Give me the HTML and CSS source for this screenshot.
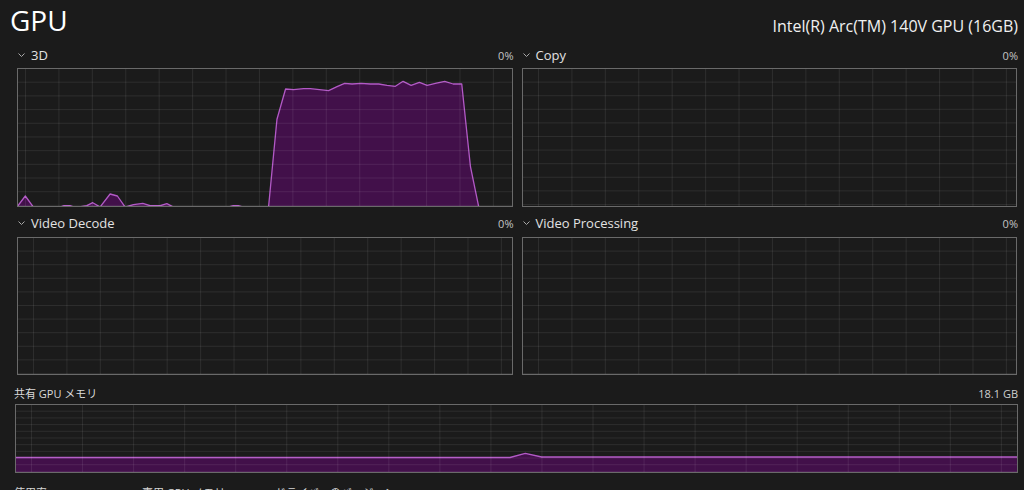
FILE: index.html
```html
<!DOCTYPE html>
<html lang="ja">
<head>
<meta charset="utf-8">
<title>GPU</title>
<link rel="stylesheet" href="styles.css">
</head>
<body>
<div class="page">
  <header class="top">
    <h1 class="title">GPU</h1>
    <div class="device">Intel(R) Arc(TM) 140V GPU (16GB)</div>
  </header>

  <div class="engines">
    <section class="engine engine-first">
      <div class="engine-head">
        <span class="engine-name"><svg class="chev" viewBox="0 0 7 4"><polyline points="0.5,0.5 3.5,3.5 6.5,0.5"/></svg>3D</span>
        <span class="pct">0%</span>
      </div>
      <div class="chart chart-tall grid-shift-a">
        <svg viewBox="0 0 493 137" preserveAspectRatio="none">
          <polygon class="area" points="-1,138 7.3,127 15.3,138 42,138 46,136.7 52,136.7 56,138 60.3,138 68.7,136.7 74.7,133.7 82,138 92,125 99.3,127 107,138 115.3,135.7 124.7,134.3 132,136.7 142,136.7 148.7,134.7 155.3,138 210,138 215,136.7 220,136.7 225,138 250.3,138 258.7,50.3 267.3,20 275.3,20.7 285.3,19.7 292,19.7 310.3,21.7 318.7,17.7 326.3,14.3 333.7,15 342.7,14.3 352,15 360.3,15 368.7,16.3 377,17.3 384.7,12.3 392.7,16.3 401,13.3 408.7,16.3 417,14.3 426.3,12.3 434.7,15 443.3,15 452,97.7 460.3,138 494,138"/>
          <polyline class="line" points="-1,138 7.3,127 15.3,138 42,138 46,136.7 52,136.7 56,138 60.3,138 68.7,136.7 74.7,133.7 82,138 92,125 99.3,127 107,138 115.3,135.7 124.7,134.3 132,136.7 142,136.7 148.7,134.7 155.3,138 210,138 215,136.7 220,136.7 225,138 250.3,138 258.7,50.3 267.3,20 275.3,20.7 285.3,19.7 292,19.7 310.3,21.7 318.7,17.7 326.3,14.3 333.7,15 342.7,14.3 352,15 360.3,15 368.7,16.3 377,17.3 384.7,12.3 392.7,16.3 401,13.3 408.7,16.3 417,14.3 426.3,12.3 434.7,15 443.3,15 452,97.7 460.3,138 494,138"/>
        </svg>
      </div>
    </section>

    <section class="engine engine-first">
      <div class="engine-head">
        <span class="engine-name"><svg class="chev" viewBox="0 0 7 4"><polyline points="0.5,0.5 3.5,3.5 6.5,0.5"/></svg>Copy</span>
        <span class="pct">0%</span>
      </div>
      <div class="chart chart-tall grid-shift-b"></div>
    </section>

    <section class="engine engine-second">
      <div class="engine-head">
        <span class="engine-name"><svg class="chev" viewBox="0 0 7 4"><polyline points="0.5,0.5 3.5,3.5 6.5,0.5"/></svg>Video Decode</span>
        <span class="pct">0%</span>
      </div>
      <div class="chart chart-mid grid-shift-b"></div>
    </section>

    <section class="engine engine-second">
      <div class="engine-head">
        <span class="engine-name"><svg class="chev" viewBox="0 0 7 4"><polyline points="0.5,0.5 3.5,3.5 6.5,0.5"/></svg>Video Processing</span>
        <span class="pct">0%</span>
      </div>
      <div class="chart chart-mid grid-shift-b"></div>
    </section>
  </div>

  <section class="memory">
    <div class="mem-head">
      <span class="mem-name">共有 GPU メモリ</span>
      <span class="mem-size">18.1 GB</span>
    </div>
    <div class="chart chart-mem">
      <svg viewBox="0 0 1001 67" preserveAspectRatio="none">
        <polygon class="area" points="-1,52.5 494,52.5 509.3,48.3 525.7,52 1002,52 1002,68 -1,68"/>
        <polyline class="line" points="-1,52.5 494,52.5 509.3,48.3 525.7,52 1002,52"/>
      </svg>
    </div>
  </section>

  <div class="stats">
    <span>使用率</span>
    <span>専用 GPU メモリ</span>
    <span>ドライバーのバージョン:</span>
  </div>
</div>
</body>
</html>
```

FILE: styles.css
```css
html, body {
  margin: 0;
  padding: 0;
  background: #1b1b1b;
  overflow: hidden;
}

body {
  width: 1024px;
  height: 490px;
  font-family: "Open Sans", "Noto Sans CJK JP", sans-serif;
  color: #e6e6e6;
}

.page {
  padding: 0 6px 0 10px;
}

.top {
  height: 44px;
  display: flex;
  justify-content: space-between;
  align-items: flex-start;
}

.title {
  margin: 0;
  font-size: 28px;
  font-weight: 400;
  line-height: 40px;
  color: #ffffff;
}

.device {
  font-size: 16px;
  line-height: 20px;
  margin-top: 16px;
  color: #f0f0f0;
}

.engines {
  margin: 0 1px 0 7px;
  display: grid;
  grid-template-columns: 1fr 1fr;
  column-gap: 9px;
}

.engine {
  display: flex;
  flex-direction: column;
}

.engine-head {
  display: flex;
  justify-content: space-between;
  align-items: flex-end;
  padding-bottom: 4px;
  box-sizing: border-box;
}

.engine-first .engine-head {
  height: 24px;
}

.engine-second .engine-head {
  height: 30px;
  padding-bottom: 5px;
}

.engine-name {
  font-size: 13px;
  line-height: 17px;
  color: #e2e2e2;
}

.chev {
  width: 7px;
  height: 4px;
  margin: 0 6px 0 1px;
  vertical-align: 3px;
  fill: none;
  stroke: #a8a8a8;
  stroke-width: 1;
}

.pct {
  font-size: 11px;
  line-height: 17px;
  color: #c4c4c4;
  margin-right: -1px;
}

.chart {
  position: relative;
  box-sizing: border-box;
  border: 1px solid #6a6a6a;
}

.chart::after {
  content: "";
  position: absolute;
  inset: 0;
  pointer-events: none;
  background-image:
    linear-gradient(to right, rgba(255, 255, 255, 0.08) 0 1px, transparent 1px),
    linear-gradient(to bottom, transparent calc(100% - 1px), rgba(255, 255, 255, 0.08) calc(100% - 1px));
}

.chart-tall {
  height: 139px;
}

.chart-mid {
  height: 138px;
}

.grid-shift-a::after {
  background-size: 33.43px 100%, 100% 13.7px;
  background-position: 7px 0, 0 0;
}

.grid-shift-b::after {
  background-size: 33.43px 100%, 100% 13.6px;
  background-position: 15px 0, 0 0;
}

.chart svg {
  display: block;
  width: 100%;
  height: 100%;
}

.area {
  fill: #42104a;
  stroke: none;
}

.line {
  fill: none;
  stroke: #b259c6;
  stroke-width: 1.3;
  vector-effect: non-scaling-stroke;
  stroke-linejoin: round;
}

.memory {
  margin-left: 5px;
}

.mem-head {
  height: 29px;
  box-sizing: border-box;
  display: flex;
  justify-content: space-between;
  align-items: flex-end;
  padding-bottom: 3px;
  font-size: 11px;
  line-height: 15px;
}

.mem-name {
  color: #dadada;
  margin-left: -1px;
}

.mem-size {
  color: #cfcfcf;
}

.chart-mem {
  height: 69px;
}

.chart-mem::after {
  background-size: 51.05px 100%, 100% 6.7px;
  background-position: 15px 0, 0 0;
}

.stats {
  margin-top: 12px;
  padding-left: 4px;
  display: grid;
  grid-template-columns: 128px 133px auto;
  font-size: 11px;
  line-height: 16px;
  color: #d6d6d6;
}
```
